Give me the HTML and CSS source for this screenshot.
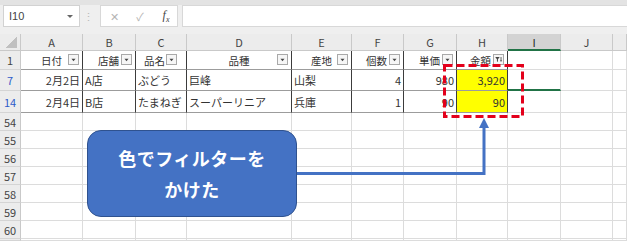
FILE: index.html
```html
<!DOCTYPE html>
<html lang="ja">
<head>
    <meta charset="UTF-8">
    <meta name="viewport" content="width=device-width, initial-scale=1.0">
    <title>色でフィルター</title>
    <link rel="stylesheet" href="styles.css">
</head>
<body>
    <div class="top">
        <div class="fbar">
            <div class="namebox"><span>I10</span><span class="nb-arrow"></span></div>
            <div class="grip">⋮</div>
            <div class="fx-tools">
                <span class="ic">✕</span>
                <span class="ic">✓</span>
                <span class="fx">f<sub>x</sub></span>
            </div>
            <div class="finput"></div>
        </div>
    </div>

    <div class="sheet">
        <div class="row colhead">
            <div class="corner"></div>
            <div>A</div><div>B</div><div>C</div><div>D</div><div>E</div>
            <div>F</div><div>G</div><div>H</div><div class="sel">I</div><div>J</div><div></div>
        </div>

        <div class="row r1">
            <div class="rh">1</div>
            <div class="t h">日付<span class="fb"><svg viewBox="0 0 11 11"><path d="M3 4.5h5l-2.5 3z"/></svg></span></div>
            <div class="t h hr">店舗<span class="fb"><svg viewBox="0 0 11 11"><path d="M3 4.5h5l-2.5 3z"/></svg></span></div>
            <div class="t h hr hc">品名<span class="fb fb-c"><svg viewBox="0 0 11 11"><path d="M3 4.5h5l-2.5 3z"/></svg></span></div>
            <div class="t h">品種<span class="fb"><svg viewBox="0 0 11 11"><path d="M3 4.5h5l-2.5 3z"/></svg></span></div>
            <div class="t h">産地<span class="fb"><svg viewBox="0 0 11 11"><path d="M3 4.5h5l-2.5 3z"/></svg></span></div>
            <div class="t h hr">個数<span class="fb"><svg viewBox="0 0 11 11"><path d="M3 4.5h5l-2.5 3z"/></svg></span></div>
            <div class="t h hr">単価<span class="fb"><svg viewBox="0 0 11 11"><path d="M3 4.5h5l-2.5 3z"/></svg></span></div>
            <div class="t h hr">金額<span class="fb"><svg viewBox="0 0 11 11"><path d="M1.5 2.5h5.5l-2.2 2.6v3.4l-1.2-0.9v-2.5z"/><path d="M8.6 2.5v5" stroke="#444" stroke-width="1"/><path d="M7.2 6.6h2.8l-1.4 1.8z"/></svg></span></div>
            <div></div><div></div><div></div>
        </div>

        <div class="row r7">
            <div class="rh f">7</div>
            <div class="t n">2月2日</div>
            <div class="t">A店</div>
            <div class="t">ぶどう</div>
            <div class="t">巨峰</div>
            <div class="t">山梨</div>
            <div class="t n">4</div>
            <div class="t n">980</div>
            <div class="t n y">3,920</div>
            <div class="cur"></div><div></div><div></div>
        </div>

        <div class="row r14">
            <div class="rh f">14</div>
            <div class="t n">2月4日</div>
            <div class="t">B店</div>
            <div class="t">たまねぎ</div>
            <div class="t">スーパーリニア</div>
            <div class="t">兵庫</div>
            <div class="t n">1</div>
            <div class="t n">90</div>
            <div class="t n y">90</div>
            <div></div><div></div><div></div>
        </div>

        <div class="row"><div class="rh">54</div><div></div><div></div><div></div><div></div><div></div><div></div><div></div><div></div><div></div><div></div><div></div></div>
        <div class="row"><div class="rh">55</div><div></div><div></div><div></div><div></div><div></div><div></div><div></div><div></div><div></div><div></div><div></div></div>
        <div class="row"><div class="rh">56</div><div></div><div></div><div></div><div></div><div></div><div></div><div></div><div></div><div></div><div></div><div></div></div>
        <div class="row"><div class="rh">57</div><div></div><div></div><div></div><div></div><div></div><div></div><div></div><div></div><div></div><div></div><div></div></div>
        <div class="row"><div class="rh">58</div><div></div><div></div><div></div><div></div><div></div><div></div><div></div><div></div><div></div><div></div><div></div></div>
        <div class="row"><div class="rh">59</div><div></div><div></div><div></div><div></div><div></div><div></div><div></div><div></div><div></div><div></div><div></div></div>
        <div class="row"><div class="rh">60</div><div></div><div></div><div></div><div></div><div></div><div></div><div></div><div></div><div></div><div></div><div></div></div>
        <div class="row last"><div class="rh"></div><div></div><div></div><div></div><div></div><div></div><div></div><div></div><div></div><div></div><div></div><div></div></div>
    </div>

    <!-- annotation layer: dashed frame + connector arrow -->
    <svg class="overlay" width="627" height="241" viewBox="0 0 627 241">
        <rect x="444.5" y="65.5" width="78" height="51" fill="none" stroke="#e3001b" stroke-width="3" stroke-dasharray="8 4"/>
        <path d="M297 173.5H484V126" fill="none" stroke="#4472c4" stroke-width="3"/>
        <path d="M484 118l-5 10h10z" fill="#4472c4"/>
    </svg>

    <div class="callout">
        <span>色でフィルターを</span>
        <span>かけた</span>
    </div>
</body>
</html>
```

FILE: styles.css
```css
body {
    margin: 0;
    width: 627px;
    height: 241px;
    overflow: hidden;
    position: relative;
    background-color: #ffffff;
    font-family: "Noto Sans CJK JP", "Noto Sans", sans-serif;
    font-size: 11px;
    color: #222222;
}

/* formula bar */
.top {
    height: 34px;
    box-sizing: border-box;
    border-top: 5px solid #e3e3e3;
    background-color: #efefef;
}

.fbar {
    display: flex;
    height: 22px;
}

.namebox {
    margin-left: 3px;
    width: 77px;
    box-sizing: border-box;
    background-color: #ffffff;
    border: 1px solid #d2d2d2;
    display: flex;
    align-items: center;
    justify-content: space-between;
    padding: 0 6px 0 5px;
    color: #444444;
    font-family: "Liberation Sans", Arial, sans-serif;
    font-size: 11px;
}

.nb-arrow {
    width: 0;
    height: 0;
    border-left: 3px solid transparent;
    border-right: 3px solid transparent;
    border-top: 3px solid #666666;
}

.grip {
    width: 16px;
    margin-right: 4px;
    display: flex;
    align-items: center;
    justify-content: center;
    color: #b8b8b8;
    font-size: 11px;
}

.fx-tools {
    width: 78px;
    box-sizing: border-box;
    background-color: #ffffff;
    border: 1px solid #d8d8d8;
    display: grid;
    grid-template-columns: 26px 26px 26px;
    align-items: center;
    justify-items: center;
}

.ic {
    color: #b4b4b4;
    font-size: 11px;
}

.fx {
    font-family: "Liberation Serif", "DejaVu Serif", serif;
    font-style: italic;
    font-size: 12px;
    color: #444444;
}

.fx sub {
    font-size: 8px;
}

.finput {
    flex: 1;
    margin-left: 4px;
    background-color: #ffffff;
    border: 1px solid #d8d8d8;
    border-right: none;
}

/* grid */
.row {
    display: grid;
    grid-template-columns: 21px 62px 53px 51px 105px 60px 52px 53px 51px 53px 52px 14px;
    height: 18px;
}

.row > div {
    box-sizing: border-box;
    border-right: 1px solid #dcdcdc;
    border-bottom: 1px solid #dcdcdc;
    display: flex;
    align-items: center;
    overflow: hidden;
    white-space: nowrap;
    padding: 0 2px;
}

.colhead {
    height: 17px;
}

.colhead > div {
    background-color: #ececec;
    border-color: #c9c9c9;
    justify-content: center;
    color: #444444;
}

.colhead .sel {
    background-color: #d3d3d3;
    border-bottom: 2px solid #217346;
    color: #222222;
}

.colhead .corner {
    background: #ececec linear-gradient(to bottom right, transparent 50%, #c0c0c0 50%) no-repeat right 3px bottom 2px / 11px 11px;
}

.r1 { height: 19px; }
.r7 { height: 21px; }
.r14 { height: 22px; }
.last { height: 2px; }

.row > .rh {
    background-color: #ececec;
    border-right-color: #c9c9c9;
    border-bottom-color: #d4d4d4;
    justify-content: center;
    color: #444444;
    font-size: 11px;
}

.row > .rh.f {
    color: #2d5bc9;
}

.row > .t {
    border-right-color: #3c3c3c;
    border-bottom-color: #9c9c9c;
    color: #333333;
}

.row > .n {
    justify-content: flex-end;
}

.row > .y {
    background-color: #ffff00;
}

.row > .h {
    justify-content: center;
    position: relative;
    font-size: 10.5px;
}

.row > .hr {
    justify-content: flex-end;
    padding-right: 16px;
}

.row > .hc {
    padding-right: 21px;
}

.row > .cur {
    border-bottom: 2px solid #217346;
}

.fb {
    position: absolute;
    right: 3px;
    top: 3px;
    width: 11px;
    height: 11px;
    box-sizing: border-box;
    border: 1px solid #a9a9a9;
    background-color: #f6f6f6;
    display: flex;
}

.fb-c {
    right: 9px;
}

.fb svg {
    width: 9px;
    height: 9px;
    fill: #444444;
}

/* annotations */
.overlay {
    position: absolute;
    left: 0;
    top: 0;
    pointer-events: none;
}

.callout {
    position: absolute;
    left: 87px;
    top: 130px;
    width: 210px;
    height: 87px;
    box-sizing: border-box;
    background-color: #4472c4;
    border: 1px solid #2f528f;
    border-radius: 14px;
    display: flex;
    flex-direction: column;
    justify-content: center;
    align-items: center;
    color: #ffffff;
    font-weight: bold;
    font-size: 18px;
    letter-spacing: 0.5px;
    line-height: 31px;
}
```
